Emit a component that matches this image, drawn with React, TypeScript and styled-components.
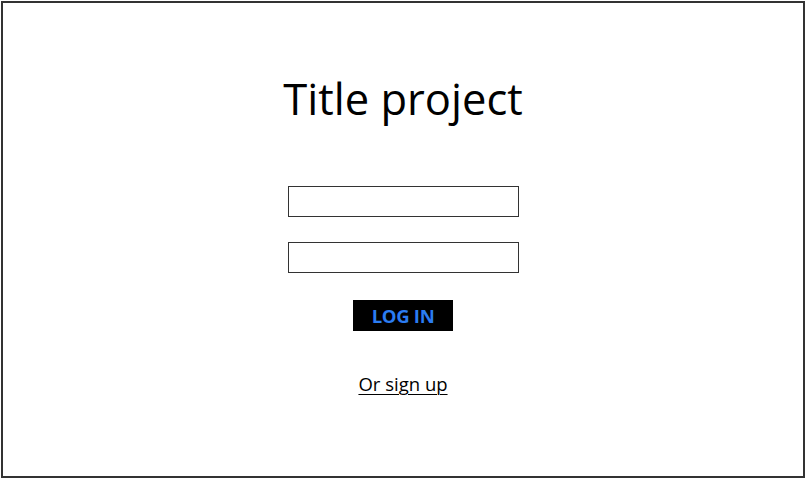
import React from "react";
import styled, { createGlobalStyle } from "styled-components";

const Global = createGlobalStyle`
  html, body { margin: 0; padding: 0; background: #fff; }
  body { font-family: "Open Sans", "Noto Sans", sans-serif; }
`;

const Frame = styled.div`
  box-sizing: border-box;
  margin: 1px;
  width: 804px;
  height: 477px;
  border: 2px solid #333;
  display: flex;
  flex-direction: column;
  align-items: center;
`;

const Title = styled.h1`
  margin: 66px 0 0;
  font-family: "Open Sans", sans-serif;
  font-weight: 400;
  font-size: 43.5px;
  line-height: 60px;
  color: #000;
`;

const Field = styled.input`
  box-sizing: border-box;
  width: 231px;
  height: 31px;
  border: 1px solid #333;
  margin-top: ${(p: { $top: number }) => p.$top}px;
  padding: 0;
  outline: none;
  background: #fff;
`;

const LoginButton = styled.button`
  margin-top: 27px;
  width: 100px;
  height: 31px;
  background: #000;
  border: none;
  color: #2b7cf2;
  font-family: "Open Sans", sans-serif;
  font-weight: 700;
  font-size: 18.5px;
  letter-spacing: -0.3px;
  padding: 0;
  line-height: 31px;
`;

const SignUp = styled.a`
  margin-top: 41px;
  font-family: "Open Sans", sans-serif;
  font-size: 18.5px;
  color: #000;
  text-decoration: underline;
  text-underline-offset: 3px;
  text-decoration-thickness: 1px;
  line-height: 24px;
`;

export default function App() {
  return (
    <>
      <Global />
      <Frame>
        <Title>Title project</Title>
        <Field $top={57} />
        <Field $top={25} />
        <LoginButton>LOG IN</LoginButton>
        <SignUp href="#">Or sign up</SignUp>
      </Frame>
    </>
  );
}
